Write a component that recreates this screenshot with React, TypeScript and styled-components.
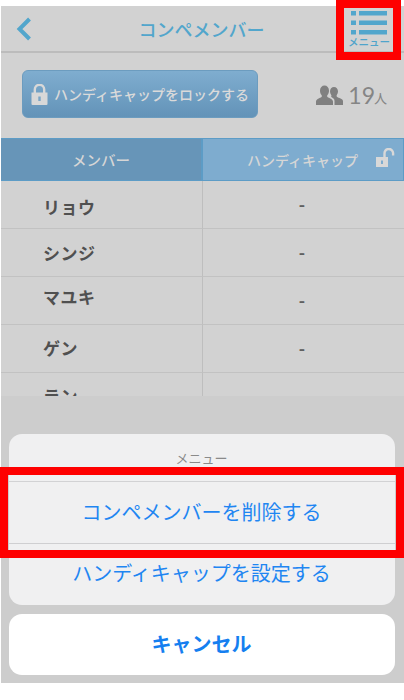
import React from "react";
import styled, { createGlobalStyle } from "styled-components";

const Global = createGlobalStyle`
  html, body { margin: 0; padding: 0; background: #fff; }
  * { box-sizing: border-box; }
  body { font-family: "Noto Sans CJK JP", "Noto Sans", sans-serif; }
`;

const Page = styled.div`
  position: relative;
  width: 404px;
  height: 700px;
  padding: 6px 0 17px 1px;
  overflow: hidden;
  background: #fff;
`;
const Screen = styled.div`
  position: relative;
  height: 677px;
  background: #d2d2d2;
  overflow: hidden;
`;
const Header = styled.header`
  display: grid;
  grid-template-columns: 60px 1fr 60px;
  align-items: center;
  height: 47px;
  border-bottom: 2px solid #bcbcbc;
`;
const Back = styled.div`
  display: flex;
  padding-left: 15px;
`;
const Title = styled.h1`
  margin: 0;
  padding-right: 2px;
  text-align: center;
  font-size: 18px;
  font-weight: 500;
  color: #52a6cc;
  line-height: 46px;
`;
const MenuButton = styled.div`
  display: flex;
  flex-direction: column;
  align-items: center;
  width: 46px;
  margin-left: 2px;
  height: 44px;
  padding-top: 4px;
`;
const MenuLabel = styled.span`
  font-size: 10.5px;
  font-weight: 500;
  line-height: 11px;
  color: #4fa4cb;
  white-space: nowrap;
  margin-top: 1px;
`;
const Toolbar = styled.div`
  display: flex;
  align-items: center;
  justify-content: space-between;
  height: 85px;
  padding: 0 17px 0 21px;
`;
const LockButton = styled.div`
  display: flex;
  align-items: center;
  gap: 6px;
  width: 236px;
  height: 48px;
  margin-bottom: 3px;
  padding-left: 8px;
  border-radius: 6px;
  border: 1px solid #6c9cbf;
  background: linear-gradient(#7fadcf, #6393b8);
  color: #dadada;
  font-size: 14px;
  font-weight: 500;
  white-space: nowrap;
`;
const Count = styled.div`
  display: flex;
  align-items: center;
  gap: 4px;
  color: #858585;
  margin-bottom: 1px;
`;
const CountNumber = styled.span`
  font-family: "Lato", sans-serif;
  font-size: 23px;
  line-height: 1;
`;
const CountUnit = styled.span`
  font-size: 13px;
  margin-left: -5px;
  margin-top: 4px;
`;
const Table = styled.div`
  display: grid;
  grid-template-columns: 202px 1fr;
  margin-left: -1px;
`;
const HeadCell = styled.div<{ $dark?: boolean }>`
  position: relative;
  display: flex;
  align-items: center;
  justify-content: ${(p) => (p.$dark ? "center" : "flex-start")};
  height: 43px;
  padding-left: ${(p) => (p.$dark ? "0" : "44px")};
  border: 1px solid #5d9cc6;
  background: ${(p) => (p.$dark ? "#6795b8" : "#7eaccf")};
  color: #d6d6d6;
  font-size: ${(p) => (p.$dark ? "14.500px" : "14px")};
  font-weight: 500;
`;
const UnlockSlot = styled.span`
  position: absolute;
  right: 7px;
  top: 9px;
  display: flex;
`;
const NameCell = styled.div<{ $shift?: number }>`
  height: 48px;
  padding: ${(p) => 8 + (p.$shift ?? 0)}px 0 0 43px;
  border-bottom: 1px solid #c2c2c2;
  font-size: 17px;
  font-weight: 700;
  line-height: 30px;
  letter-spacing: 0.5px;
  color: #505050;
`;
const ValueCell = styled.div`
  height: 48px;
  padding-top: 8px;
  padding-right: 3px;
  text-align: center;
  border-left: 1px solid #bebebe;
  border-bottom: 1px solid #c2c2c2;
  font-size: 17px;
  font-weight: 700;
  line-height: 30px;
  color: #606060;
`;
const Overlay = styled.div`
  position: absolute;
  left: -1px;
  right: 0;
  bottom: 0;
  height: 287px;
  padding: 38px 9px 8px 9px;
  display: flex;
  flex-direction: column;
  gap: 9px;
  background: #cdcdcd;
`;
const Sheet = styled.div`
  display: flex;
  flex-direction: column;
  height: 171px;
  border-radius: 13px;
  background: #f0f0f1;
  overflow: hidden;
`;
const SheetTitle = styled.div`
  height: 48px;
  padding: 12px 1px 0 0;
  text-align: center;
  font-size: 13px;
  line-height: 24px;
  color: #8a8a8a;
  border-bottom: 1px solid #d2d2d4;
`;
const SheetAction = styled.div<{ $last?: boolean }>`
  flex: ${(p) => (p.$last ? "1" : "none")};
  height: ${(p) => (p.$last ? "auto" : "62px")};
  display: flex;
  align-items: center;
  justify-content: center;
  font-size: 20px;
  color: #1f86f2;
  padding: 0 1px ${(p) => (p.$last ? "4px" : "2px")} 0;
  border-bottom: ${(p) => (p.$last ? "none" : "1px solid #cfcfd1")};
`;
const Cancel = styled.div`
  display: flex;
  align-items: center;
  justify-content: center;
  height: 61px;
  padding: 0 1px 2px 0;
  border-radius: 13px;
  background: #fff;
  font-size: 20px;
  font-weight: 700;
  color: #157ff0;
`;
const Highlight = styled.div<{ $top: number; $left: number; $width: number; $height: number }>`
  position: absolute;
  top: ${(p) => p.$top}px;
  left: ${(p) => p.$left}px;
  width: ${(p) => p.$width}px;
  height: ${(p) => p.$height}px;
  border: 8px solid #fe0000;
  pointer-events: none;
`;

const ListIcon = () => (
  <svg width="36" height="24" viewBox="0 0 36 24" fill="#52a6cc" aria-hidden>
    <rect x="0" y="0" width="5" height="4.500" />
    <rect x="8" y="0" width="28" height="4.500" />
    <rect x="0" y="9.500" width="5" height="4.500" />
    <rect x="8" y="9.500" width="28" height="4.500" />
    <rect x="0" y="19" width="5" height="4.500" />
    <rect x="8" y="19" width="28" height="4.500" />
  </svg>
);
const LockIcon = () => (
  <svg width="17" height="21" viewBox="0 0 17 21" aria-hidden>
    <path d="M3.800 9V5.500a4.700 4.700 0 0 1 9.400 0V9" fill="none" stroke="#d8d8d8" strokeWidth="2.400" />
    <path d="M0.500 8.500h16v11.500a1 1 0 0 1-1 1h-14a1 1 0 0 1-1-1z" fill="#d8d8d8" />
    <rect x="7.300" y="12.500" width="2.400" height="4.500" fill="#7ba6c6" />
  </svg>
);
const UnlockIcon = () => (
  <svg width="20" height="19" viewBox="0 0 20 19" aria-hidden>
    <path d="M8.500 10V5.500a4.300 4.300 0 0 1 8.600-.5v2.500" fill="none" stroke="#d8d8d8" strokeWidth="2.400" />
    <path d="M0 9h12v10H0z" fill="#d8d8d8" />
    <rect x="5" y="12.500" width="2" height="3.500" fill="#7eaccf" />
  </svg>
);
const PeopleIcon = () => (
  <svg width="28" height="21" viewBox="0 0 28 21" fill="#808080" aria-hidden>
    <path d="M0 20v-3.500c0-2.500 4-3.500 5.500-4.500.6-.5.4-1.500 0-2C4.300 8.500 4 7 4 5.500 4 2.500 6 .5 8.500.5S13 2.500 13 5.500c0 1.500-.3 3-1.500 4.500-.4.5-.6 1.500 0 2 1.500 1 5.500 2 5.500 4.500V20z" />
    <path d="M18.500 20v-4c0-2-1.500-3-3.500-4.200.5-.3.6-1 .2-1.700-.8-1.100-1.200-2.400-1.200-3.600 0-2.600 1.700-4.500 4-4.500s4 1.900 4 4.500c0 1.200-.4 2.500-1.200 3.600-.4.700-.2 1.400.3 1.800 1.300.8 5.900 1.600 5.900 4.100V20z" />
  </svg>
);

const members = [
  { name: "リョウ", shift: 3 },
  { name: "シンジ", shift: 1 },
  { name: "マユキ", shift: -3 },
  { name: "ゲン", shift: 0 },
  { name: "ラン", shift: 0 },
];

export default function App() {
  return (
    <Page>
      <Global />
      <Screen>
        <Header>
          <Back>
            <svg width="16" height="24" viewBox="0 0 16 24" fill="none" aria-hidden>
              <path d="M13.500 2 3.500 12l10 10" stroke="#52a6cc" strokeWidth="4" />
            </svg>
          </Back>
          <Title>コンペメンバー</Title>
          <MenuButton>
            <ListIcon />
            <MenuLabel>メニュー</MenuLabel>
          </MenuButton>
        </Header>
        <Toolbar>
          <LockButton>
            <LockIcon />
            ハンディキャップをロックする
          </LockButton>
          <Count>
            <PeopleIcon />
            <CountNumber>19</CountNumber>
            <CountUnit>人</CountUnit>
          </Count>
        </Toolbar>
        <Table>
          <HeadCell $dark>メンバー</HeadCell>
          <HeadCell>
            ハンディキャップ
            <UnlockSlot>
              <UnlockIcon />
            </UnlockSlot>
          </HeadCell>
          {members.map((m) => (
            <React.Fragment key={m.name}>
              <NameCell $shift={m.shift}>{m.name}</NameCell>
              <ValueCell>-</ValueCell>
            </React.Fragment>
          ))}
        </Table>
        <Overlay>
          <Sheet>
            <SheetTitle>メニュー</SheetTitle>
            <SheetAction>コンペメンバーを削除する</SheetAction>
            <SheetAction $last>ハンディキャップを設定する</SheetAction>
          </Sheet>
          <Cancel>キャンセル</Cancel>
        </Overlay>
      </Screen>
      <Highlight $top={0} $left={336} $width={65} $height={60} />
      <Highlight $top={467} $left={0} $width={404} $height={91} />
    </Page>
  );
}
